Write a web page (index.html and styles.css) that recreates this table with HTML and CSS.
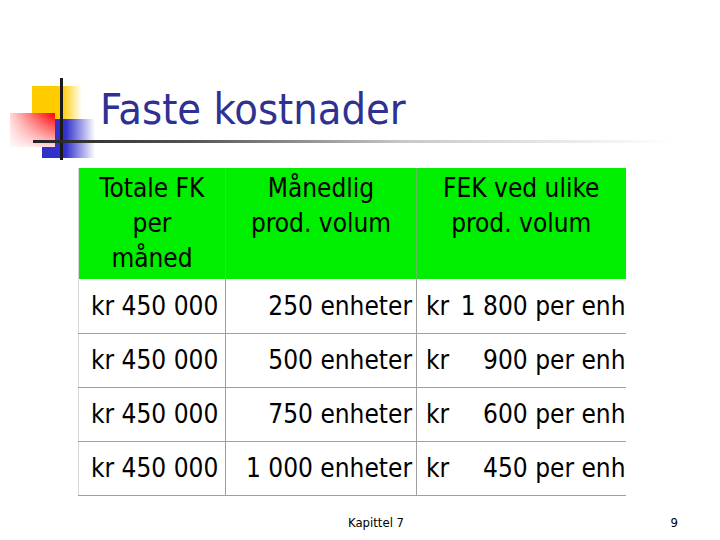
FILE: index.html
```html
<!DOCTYPE html>
<html lang="no">
<head>
<meta charset="utf-8">
<title>Faste kostnader</title>
<link rel="stylesheet" href="styles.css">
</head>
<body>
<div class="slide">
  <header class="title-area">
    <svg class="logo" width="100" height="90" viewBox="0 0 100 90" aria-hidden="true">
      <defs>
        <linearGradient id="gy" x1="0" y1="0" x2="1" y2="0">
          <stop offset="0" stop-color="#FFCC00"/>
          <stop offset="0.6" stop-color="#FFCC00"/>
          <stop offset="1" stop-color="#FFCC00" stop-opacity="0"/>
        </linearGradient>
        <linearGradient id="gb" x1="0" y1="0" x2="1" y2="0">
          <stop offset="0" stop-color="#2E2EC8"/>
          <stop offset="0.45" stop-color="#3333CC"/>
          <stop offset="1" stop-color="#3333CC" stop-opacity="0"/>
        </linearGradient>
        <linearGradient id="grh" x1="1" y1="0" x2="0" y2="0">
          <stop offset="0" stop-color="#FF0000"/>
          <stop offset="0.15" stop-color="#FF1a1a"/>
          <stop offset="1" stop-color="#FFD8D8"/>
        </linearGradient>
        <linearGradient id="grv" x1="0" y1="0" x2="0" y2="1">
          <stop offset="0" stop-color="#ffffff" stop-opacity="0"/>
          <stop offset="1" stop-color="#ffffff" stop-opacity="0.85"/>
        </linearGradient>
      </defs>
      <rect x="32" y="16" width="50" height="34" fill="url(#gy)"/>
      <rect x="42" y="49" width="53" height="39" fill="url(#gb)"/>
      <rect x="10" y="43" width="45" height="34" fill="url(#grh)"/>
      <rect x="10" y="43" width="45" height="34" fill="url(#grv)"/>
      <rect x="60" y="8" width="3" height="82" fill="#1a1a1a"/>
    </svg>
    <div class="rule"></div>
    <h1 class="title">Faste kostnader</h1>
  </header>

  <table class="costs">
    <thead>
      <tr>
        <th class="c1">Totale FK<br>per<br>måned</th>
        <th class="c2">Månedlig<br>prod. volum</th>
        <th class="c3">FEK ved ulike<br>prod. volum</th>
      </tr>
    </thead>
    <tbody>
      <tr>
        <td class="c1">kr 450 000</td>
        <td class="c2 num">250 enheter</td>
        <td class="c3"><span class="split"><span>kr</span><span>1 800 per enh</span></span></td>
      </tr>
      <tr>
        <td class="c1">kr 450 000</td>
        <td class="c2 num">500 enheter</td>
        <td class="c3"><span class="split"><span>kr</span><span>900 per enh</span></span></td>
      </tr>
      <tr>
        <td class="c1">kr 450 000</td>
        <td class="c2 num">750 enheter</td>
        <td class="c3"><span class="split"><span>kr</span><span>600 per enh</span></span></td>
      </tr>
      <tr>
        <td class="c1">kr 450 000</td>
        <td class="c2 num">1 000 enheter</td>
        <td class="c3"><span class="split"><span>kr</span><span>450 per enh</span></span></td>
      </tr>
    </tbody>
  </table>

  <footer class="footer">
    <span class="chapter">Kapittel 7</span>
    <span class="page">9</span>
  </footer>
</div>
</body>
</html>
```

FILE: styles.css
```css
* { box-sizing: border-box; }
html, body {
  margin: 0;
  padding: 0;
  background: #ffffff;
}
body {
  font-family: "DejaVu Sans Condensed", "DejaVu Sans", sans-serif;
  width: 720px;
  height: 540px;
  overflow: hidden;
}
.slide {
  width: 720px;
  height: 540px;
  display: flex;
  flex-direction: column;
}
.title-area {
  position: relative;
  height: 168px;
  padding: 84px 0 0 100px;
}
.logo {
  position: absolute;
  left: 0;
  top: 70px;
}
.rule {
  position: absolute;
  left: 33px;
  top: 140px;
  width: 640px;
  height: 3px;
  background: linear-gradient(to right, #222222 0%, #555555 25%, #c8c8c8 58%, #ffffff 100%);
}
.title {
  margin: 0;
  font-family: "DejaVu Sans Condensed", "DejaVu Sans", sans-serif;
  font-weight: normal;
  font-size: 43px;
  line-height: 50px;
  color: #2E3192;
  position: relative;
}
.costs {
  margin-left: 78px;
  width: 547px;
  border-collapse: collapse;
  table-layout: fixed;
  font-size: 26px;
  color: #000000;
}
.costs .c1 { width: 147px; }
.costs .c2 { width: 191px; }
.costs .c3 { width: 209px; }
.costs th {
  background: #00EE00;
  font-weight: normal;
  text-align: center;
  vertical-align: top;
  height: 111px;
  line-height: 35px;
  padding: 3px 4px 0;
  border-left: 1px solid #5fbf5f;
}
.costs th:first-child { border-left: 1px solid #d8d8d8; }
.costs td {
  height: 54px;
  line-height: 30px;
  padding: 10px 10px 10px;
  border: 1px solid #a0a0a0;
  border-top: none;
  white-space: nowrap;
}
.costs td:last-child { border-right: none; }
.costs td:first-child { border-left: 1px solid #d8d8d8; padding-left: 12px; padding-right: 4px; }
.costs td.num { text-align: right; padding-right: 4px; padding-left: 4px; }
.costs td.c3 { padding-left: 9px; padding-right: 0; }
.split {
  display: flex;
  justify-content: space-between;
}
.footer {
  height: 44px;
  padding-top: 10px;
  font-family: "DejaVu Sans Condensed", "DejaVu Sans", sans-serif;
  font-size: 13px;
  color: #000;
  display: flex;
  align-items: center;
}
.chapter { margin-left: 348px; }
.page { margin-left: auto; margin-right: 42px; }
```
